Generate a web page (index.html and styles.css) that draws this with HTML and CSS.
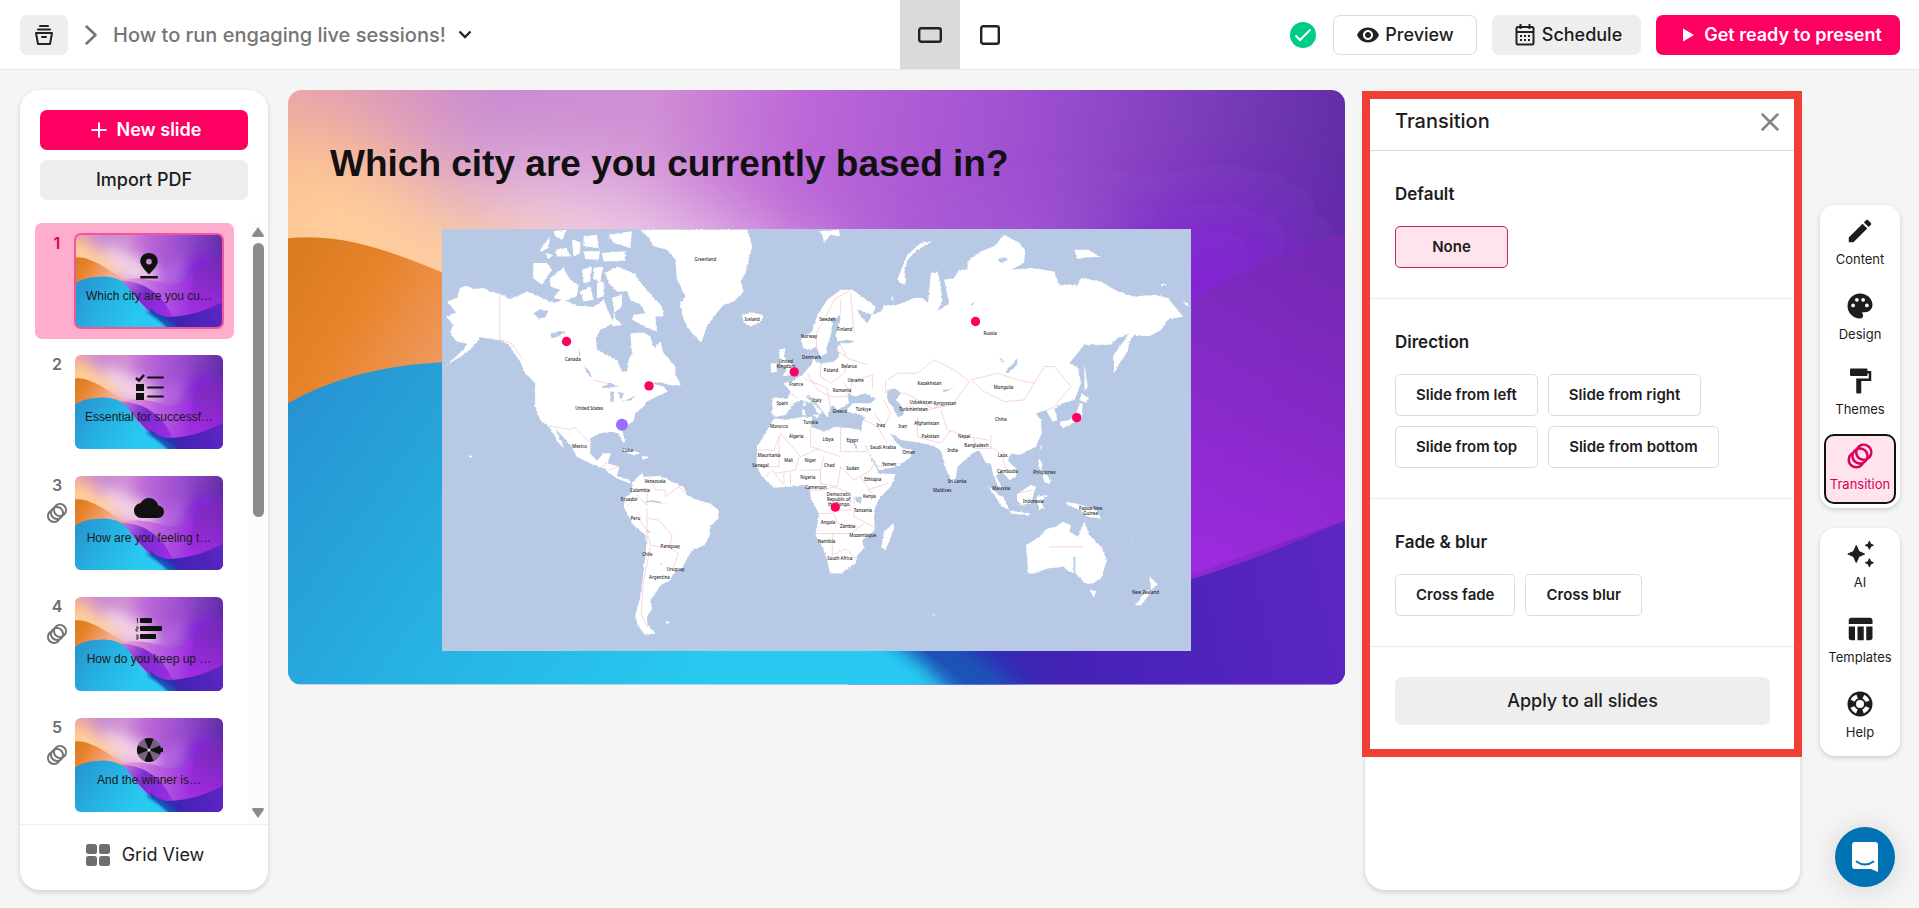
FILE: index.html
```html
<!DOCTYPE html>
<html lang="en">
<head>
<meta charset="utf-8">
<meta name="viewport" content="width=device-width, initial-scale=1">
<title>How to run engaging live sessions!</title>
<link rel="stylesheet" href="styles.css">
</head>
<body>
<svg class="defs" aria-hidden="true">
  <defs>
    <linearGradient id="sky" x1="0" y1="0" x2="1056" y2="120" gradientUnits="userSpaceOnUse">
      <stop offset="0" stop-color="#e6a0b4"/><stop offset=".2" stop-color="#c98bd0"/><stop offset=".34" stop-color="#d08fd4"/><stop offset=".48" stop-color="#bd68d8"/>
      <stop offset=".7" stop-color="#9c4fd0"/><stop offset="1" stop-color="#5f2da6"/>
    </linearGradient>
    <linearGradient id="orange" x1="0" y1="150" x2="240" y2="300" gradientUnits="userSpaceOnUse">
      <stop offset="0" stop-color="#d87a1e"/><stop offset=".35" stop-color="#e8842c"/><stop offset="1" stop-color="#f6ac90"/>
    </linearGradient>
    <linearGradient id="band" x1="340" y1="300" x2="1056" y2="300" gradientUnits="userSpaceOnUse">
      <stop offset="0" stop-color="#eba6d2"/><stop offset=".35" stop-color="#b85fe0"/><stop offset=".7" stop-color="#9a2be0"/><stop offset="1" stop-color="#7a24b8"/>
    </linearGradient>
    <linearGradient id="bandLow" x1="0" y1="180" x2="0" y2="480" gradientUnits="userSpaceOnUse">
      <stop offset="0" stop-color="#6f2bb0" stop-opacity=".6"/><stop offset="1" stop-color="#a42be6" stop-opacity=".7"/>
    </linearGradient>
    <linearGradient id="swoosh" x1="336" y1="300" x2="700" y2="520" gradientUnits="userSpaceOnUse">
      <stop offset="0" stop-color="#c878e0"/><stop offset=".4" stop-color="#7a2cd0"/><stop offset="1" stop-color="#a02ce6"/>
    </linearGradient>
    <linearGradient id="cyan" x1="0" y1="300" x2="420" y2="600" gradientUnits="userSpaceOnUse">
      <stop offset="0" stop-color="#2792d0"/><stop offset=".5" stop-color="#27b2e2"/><stop offset="1" stop-color="#28caf2"/>
    </linearGradient>
    <linearGradient id="deep" x1="640" y1="560" x2="1056" y2="480" gradientUnits="userSpaceOnUse">
      <stop offset="0" stop-color="#2334b4"/><stop offset=".3" stop-color="#4322b4"/><stop offset="1" stop-color="#5c26c2"/>
    </linearGradient>
    <filter id="soft" x="-200" y="-200" width="1500" height="1000" filterUnits="userSpaceOnUse"><feGaussianBlur stdDeviation="45"/></filter>
    <filter id="edge" x="-20%" y="-20%" width="140%" height="140%"><feGaussianBlur stdDeviation="9"/></filter>
    <filter id="coast" x="0" y="0" width="100%" height="100%">
      <feTurbulence type="fractalNoise" baseFrequency=".12" numOctaves="2" seed="4"/>
      <feDisplacementMap in="SourceGraphic" scale="8" xChannelSelector="R" yChannelSelector="G"/>
    </filter>
    <symbol id="waves" viewBox="0 0 1056 594" preserveAspectRatio="none">
      <rect width="1056" height="594" fill="url(#sky)"/>
      <g filter="url(#soft)">
        <ellipse cx="20" cy="120" rx="110" ry="90" fill="#ffbe74"/>
        <path d="M-60 80L90 70 360 200 420 300 0 240z" fill="#ffcf9c"/>
        <path d="M170 60L330 100 540 190 640 310 380 310z" fill="#f0cfe8"/>
        <path d="M560 250L800 140 720 320 600 320z" fill="#b866e2"/>
        <ellipse cx="890" cy="200" rx="130" ry="65" fill="#8420d8" transform="rotate(-25 890 200)"/>
      </g>
      <path d="M330 290C450 270 560 290 640 316C740 332 790 290 850 245C920 195 990 160 1056 143V594H560z" fill="url(#band)"/>
      <path d="M850 245C920 195 990 160 1056 143V430L800 520z" fill="url(#bandLow)"/>
      <path d="M0 148C60 142 110 165 154 182C230 212 290 270 372 292L336 310 0 330z" fill="url(#orange)"/>
      <path d="M320 292C430 300 500 320 570 372C640 420 670 480 700 526L560 520z" fill="url(#swoosh)"/>
      <path d="M540 470C580 510 640 528 700 523C820 512 900 500 1056 430V594H560z" fill="url(#deep)"/>
      <path d="M0 313C50 285 100 275 154 272C220 262 300 275 345 305C400 350 430 410 480 450C550 510 610 540 680 594H0z" fill="url(#cyan)"/>
      <path d="M500 485C580 540 620 550 670 610H740C700 560 620 520 540 490z" fill="#1f52b8" filter="url(#edge)"/>
    </symbol>
    <symbol id="i-transition" viewBox="0 0 24 24">
      <path d="M15 2c-2.71 0-5.05 1.54-6.22 3.78a7.062 7.062 0 0 0-3 3A6.997 6.997 0 0 0 2 15c0 3.87 3.13 7 7 7 2.71 0 5.05-1.54 6.22-3.78a7.062 7.062 0 0 0 3-3A6.997 6.997 0 0 0 22 9c0-3.87-3.13-7-7-7zM9 20a5.002 5.002 0 0 1-4-8c0 3.87 3.13 7 7 7-.84.63-1.88 1-3 1zm3-3a5.002 5.002 0 0 1-4-8c0 3.86 3.13 6.99 7 7-.84.63-1.88 1-3 1zm4.7-3.3c-.53.19-1.1.3-1.7.3-2.76 0-5-2.24-5-5 0-.6.11-1.17.3-1.7.53-.19 1.1-.3 1.7-.3 2.76 0 5 2.24 5 5 0 .6-.11 1.17-.3 1.7zM19 12c0-3.86-3.13-6.99-7-7a5.002 5.002 0 0 1 7 7z"/>
    </symbol>
  </defs>
</svg>

<header class="topbar">
  <div class="topbar-left">
    <button class="btn btn-grey btn-archive" aria-label="My presentations">
      <svg width="20" height="20" viewBox="0 0 20 20" fill="none" stroke="#222" stroke-width="2" stroke-linecap="round" stroke-linejoin="round"><path d="M6 1h8M4 4.500h12M2 8h16l-2 11H4zM8 12h4"/></svg>
    </button>
    <svg class="crumb" width="12" height="20" viewBox="0 0 12 20" fill="none" stroke="#757575" stroke-width="2.500" stroke-linecap="round" stroke-linejoin="round"><path d="M1.500 1.500L10.500 10l-9 8.500"/></svg>
    <button class="title-button">How to run engaging live sessions!
      <svg width="14" height="9" viewBox="0 0 14 9" fill="none" stroke="#222" stroke-width="2.300"><path d="M1.500 1.500L7 7l5.500-5.500"/></svg>
    </button>
  </div>
  <div class="ratio">
    <button class="ratio-button is-on" aria-label="Wide slide">
      <svg width="24" height="16" viewBox="0 0 24 16" fill="none" stroke="#222" stroke-width="2.400"><rect x="1.200" y="1.200" width="21.600" height="13.600" rx="2"/></svg>
    </button>
    <button class="ratio-button" aria-label="Square slide">
      <svg width="20" height="20" viewBox="0 0 20 20" fill="none" stroke="#222" stroke-width="2.400"><rect x="1.200" y="1.200" width="17.600" height="17.600" rx="2"/></svg>
    </button>
  </div>
  <div class="topbar-right">
    <svg class="saved" width="26" height="26" viewBox="0 0 26 26"><circle cx="13" cy="13" r="13" fill="#00cb88"/><path d="M5.500 13.500l4.500 4.500L20.500 7.500" fill="none" stroke="#fff" stroke-width="2"/></svg>
    <button class="btn btn-outline btn-preview">
      <svg width="24" height="24" viewBox="0 0 24 24" fill="#222"><path d="M12 4.500C7 4.500 2.730 7.610 1 12c1.730 4.390 6 7.500 11 7.500s9.270-3.110 11-7.500c-1.730-4.390-6-7.500-11-7.500zM12 17c-2.760 0-5-2.240-5-5s2.240-5 5-5 5 2.240 5 5-2.240 5-5 5zm0-8c-1.660 0-3 1.340-3 3s1.340 3 3 3 3-1.340 3-3-1.340-3-3-3z"/></svg>
      Preview
    </button>
    <button class="btn btn-grey btn-schedule">
      <svg width="20" height="22" viewBox="0 0 20 22" fill="none" stroke="#222" stroke-width="2"><rect x="1.500" y="3" width="17" height="17.500" rx="1.500"/><path d="M2 8h16M5.500 0v5M14.500 0v5"/><path d="M5 12h10M5 16h10" stroke-dasharray="2 2"/></svg>
      Schedule
    </button>
    <button class="btn btn-pink btn-present">
      <svg width="12" height="14" viewBox="0 0 12 14" fill="#fff"><path d="M1 .500v13L12 7z"/></svg>
      Get ready to present
    </button>
  </div>
</header>

<main class="workspace">
  <aside class="card sidebar">
    <div class="sidebar-actions">
      <button class="btn btn-pink btn-new"><svg width="16" height="16" viewBox="0 0 16 16" fill="none" stroke="#fff" stroke-width="2"><path d="M8 .500v15M.500 8h15"/></svg>New slide</button>
      <button class="btn btn-grey">Import PDF</button>
    </div>
    <div class="slides">
      <ol class="slide-list">
        <li class="slide-item is-selected">
          <div class="slide-meta"><span>1</span></div>
          <div class="thumb">
            <svg class="thumb-bg"><use href="#waves"/></svg>
            <div class="thumb-body">
              <svg width="30" height="30" viewBox="0 0 24 24" fill="#111"><path d="M12 1.500c-4 0-7 3-7 6.800C5 12.500 12 18.500 12 18.500s7-6 7-10.200c0-3.800-3-6.800-7-6.800zm0 4.700a2.300 2.300 0 1 1 0 4.600 2.300 2.300 0 0 1 0-4.600zM5 20v2h14v-2z" fill-rule="evenodd"/></svg>
              <span>Which city are you cu…</span>
            </div>
          </div>
        </li>
        <li class="slide-item">
          <div class="slide-meta"><span>2</span></div>
          <div class="thumb">
            <svg class="thumb-bg"><use href="#waves"/></svg>
            <div class="thumb-body">
              <svg width="30" height="30" viewBox="0 0 30 30" fill="#111"><path d="M2 12h8v7H2zM2 21h8v7H2z"/><path d="M2 6l3 2.500L10 3" fill="none" stroke="#111" stroke-width="2.500"/><path d="M14 5.500h15M14 15.500h15M14 24.500h15" stroke="#111" stroke-width="2" stroke-linecap="round"/></svg>
              <span>Essential for successf…</span>
            </div>
          </div>
        </li>
        <li class="slide-item">
          <div class="slide-meta"><span>3</span><svg width="24" height="24"><use href="#i-transition"/></svg></div>
          <div class="thumb">
            <svg class="thumb-bg"><use href="#waves"/></svg>
            <div class="thumb-body">
              <svg width="30" height="30" viewBox="0 0 24 24" fill="#111"><path d="M19.350 10.040A7.490 7.490 0 0 0 12 4C9.110 4 6.600 5.640 5.350 8.040A5.994 5.994 0 0 0 0 14c0 3.310 2.690 6 6 6h13c2.760 0 5-2.240 5-5 0-2.640-2.050-4.780-4.650-4.960z"/></svg>
              <span>How are you feeling t…</span>
            </div>
          </div>
        </li>
        <li class="slide-item">
          <div class="slide-meta"><span>4</span><svg width="24" height="24"><use href="#i-transition"/></svg></div>
          <div class="thumb">
            <svg class="thumb-bg"><use href="#waves"/></svg>
            <div class="thumb-body">
              <svg width="30" height="30" viewBox="0 0 30 30" fill="#111"><rect x="6" y="4" width="12" height="5" rx="1"/><rect x="6" y="12" width="22" height="5" rx="1"/><rect x="6" y="20" width="16" height="5" rx="1"/><path d="M2.500 5l1-.500V9M2 13h2v2H2v2h2M2 21h2v4H2m0-2h2" fill="none" stroke="#111" stroke-width=".800"/></svg>
              <span>How do you keep up …</span>
            </div>
          </div>
        </li>
        <li class="slide-item">
          <div class="slide-meta"><span>5</span><svg width="24" height="24"><use href="#i-transition"/></svg></div>
          <div class="thumb">
            <svg class="thumb-bg"><use href="#waves"/></svg>
            <div class="thumb-body">
              <svg width="30" height="30" viewBox="0 0 30 30"><circle cx="15" cy="15" r="12" fill="#7a5f86"/><path d="M15 15L10.400 3.900a12 12 0 0 1 9.200 0zM15 15l11.100-4.600a12 12 0 0 1 0 9.200zM15 15l4.600 11.100a12 12 0 0 1-9.200 0zM15 15L3.900 19.600a12 12 0 0 1 0-9.200z" fill="#111"/><path d="M22 15l7-2.500v5z" fill="#111"/><circle cx="15" cy="15" r="1.500" fill="#ddd"/></svg>
              <span>And the winner is…</span>
            </div>
          </div>
        </li>
      </ol>
      <div class="scrollbar" aria-hidden="true">
        <svg width="12" height="10" viewBox="0 0 12 10" fill="#8b8b8b"><path d="M6 0l6 8.500-.700 1.500H.700L0 8.500z"/></svg>
        <div class="scroll-track"><div class="scroll-thumb"></div></div>
        <svg width="12" height="10" viewBox="0 0 12 10" fill="#8b8b8b"><path d="M6 10L0 1.500.700 0h10.600l.700 1.500z"/></svg>
      </div>
    </div>
    <button class="grid-view">
      <svg width="24" height="24" viewBox="0 0 24 24" fill="#6e6e6e"><rect x="0" y="1" width="11" height="10" rx="2.500"/><rect x="13" y="1" width="11" height="10" rx="2.500"/><rect x="0" y="13" width="11" height="10" rx="2.500"/><rect x="13" y="13" width="11" height="10" rx="2.500"/></svg>
      Grid View
    </button>
  </aside>

  <section class="stage">
    <svg class="stage-bg"><use href="#waves"/></svg>
    <div class="stage-body">
      <h1>Which city are you currently based in?</h1>
      <svg class="map" viewBox="0 0 2244 1264" role="img" aria-label="World map with answers">
        <rect width="2244" height="1264" fill="#b7c9e5"/>
        <g filter="url(#coast)">
        <g transform="translate(-36 -28)" fill="#fff">
          <path d="M108 198L135 208 160 205 185 215 210 222 240 238 265 228 290 215 330 232 370 250 400 240 440 258 490 262 520 240 535 275 550 310 510 330 497 355 500 390 530 405 560 420 575 455 590 455 595 420 605 400 600 340 640 338 660 350 670 385 690 365 700 400 735 440 735 465 752 497 722 497 690 487 660 490 700 500 712 515 680 530 650 545 640 560 615 580 612 600 575 630 585 665 577 668 565 640 540 635 510 640 480 655 480 700 500 722 520 700 542 700 532 730 567 740 560 768 600 780 600 790 560 775 520 745 480 730 440 710 425 680 375 625 402 685 385 670 358 622 330 600 315 560 315 490 285 460 270 425 235 375 210 362 170 355 150 352 130 380 100 405 45 440 100 390 112 372 80 365 60 340 70 315 48 290 78 278 52 245 80 235 90 205z"/>
          <path d="M630 30L950 30 965 80 955 120 945 160 930 185 940 215 910 245 880 255 850 290 830 320 812 368 780 335 760 300 750 250 765 230 740 180 735 120 710 90 670 80 650 50z"/>
          <path d="M310 130L350 130 365 150 335 195 308 175zM360 175L400 145 420 180 445 195 440 230 405 242 370 235 390 210 360 200zM455 150L485 140 480 185 460 190zM490 145L518 140 510 190 488 175zM525 160L560 140 610 160 640 200 695 260 700 290 675 290 680 335 655 325 605 300 610 285 645 280 630 255 600 240 590 215 560 215 535 190zM450 215L480 200 490 240 460 245zM500 190L520 185 520 230 500 235zM545 235L575 225 575 260 550 280 545 320 575 315 555 295zM330 90L360 50 355 85 335 95zM370 35L410 30 395 60 375 50zM375 90L410 85 420 110 380 110zM425 60L450 65 450 100 430 110zM460 50L500 45 505 85 460 80zM460 95L510 95 505 120 465 118zM515 100L585 95 585 122 520 125zM535 45L605 35 600 85 550 70zM345 100L370 105 355 118z"/>
          <path d="M935 290L960 278 995 285 990 305 962 320 945 308zM720 490L740 465 735 485 752 497zM570 685L600 690 630 700 610 706 585 695zM635 708L655 710 650 718 635 716zM118 706l8 2-3 5-6-2zM705 1203l15 3-8 5z"/>
          <path d="M605 788L635 758 640 770 690 768 725 785 760 800 770 825 800 840 840 850 866 872 862 895 840 920 838 945 822 975 785 990 765 1025 755 1045 728 1062 720 1080 690 1095 675 1120 660 1140 665 1165 650 1190 652 1215 675 1240 645 1243 622 1215 615 1185 630 1130 640 1050 648 980 645 945 610 915 580 860 585 835 605 815z"/>
          <g fill="#b7c9e5"><path d="M310 280l20-12 25 5-10 20-20 3zM360 345l30-12 15 2-20 15-20 5zM445 385l6 20-5 5zM460 440l15 10 12 22-10-4zM512 505l25-15 30 8-20 4zM540 515h12l-2 30-10 2zM562 515l20 5-10 20zM570 545l25-8 20-10-12 14zM640 845l30-5 35 12-30-5zM688 1030h10v4h-8zM648 928l8 4-2 6z"/></g>
        </g>
        <g transform="translate(894 -28)" fill="#fff">
          <path d="M235 35L295 30 298 50 270 45 250 70 245 45zM575 65L530 90 500 120 490 160 495 195 478 190 470 180 485 140 500 105 540 70 570 65zM1000 90L1040 90 1080 112 1045 112 1010 118zM1260 192l18 4-16 6zM450 232l10 2-4 8z"/>
          <path d="M95 540L100 532 140 537 150 515 128 490 160 482 190 460 215 430 218 400 225 425 240 430 280 425 295 410 290 385 300 370 325 370 345 365 320 360 290 365 285 345 300 300 298 285 275 305 272 340 262 370 258 400 240 412 228 380 210 390 188 385 182 355 215 335 230 285 260 240 300 210 335 210 370 235 405 262 395 285 350 270 360 290 380 310 395 285 420 275 430 258 470 255 520 235 545 235 562 250 570 160 590 155 600 200 605 240 590 275 625 250 610 180 640 175 655 150 680 150 680 125 720 95 760 80 790 45 835 70 852 90 850 130 810 150 870 145 940 155 955 195 1010 195 1020 175 1080 185 1130 215 1180 230 1240 225 1280 235 1325 290 1280 300 1260 330 1225 350 1180 345 1165 365 1160 395 1135 430 1120 460 1115 410 1140 375 1165 340 1130 355 1110 375 1030 375 985 430 1010 440 1020 490 1000 540 965 550 940 565 950 600 935 605 915 570 885 580 900 600 902 640 885 680 835 705 810 700 800 720 828 750 825 770 805 780 780 750 765 770 790 815 775 805 757 765 750 730 735 730 715 690 695 700 650 740 645 775 635 785 615 745 600 690 570 675 520 665 480 660 450 640 460 660 485 685 515 690 510 710 470 740 415 750 360 650 365 605 375 590 345 580 315 575 335 550 390 550 405 535 370 520 345 530 320 520 325 550 290 570 275 555 265 570 262 595 240 565 205 525 195 530 245 575 235 585 215 550 180 540 160 550 135 585 105 590 95 585z"/>
          <path d="M100 595L135 600 185 590 215 590 212 620 250 635 285 620 330 625 358 630 375 680 395 720 415 760 465 762 450 800 415 835 400 870 402 930 365 960 370 985 350 1005 345 1030 300 1060 268 1060 260 1020 245 980 225 945 235 880 210 835 208 805 190 795 150 800 100 803 65 770 48 740 50 680 75 640zM458 910L460 925 435 990 422 980 430 935zM90 430L110 430 108 455 92 460zM115 390L135 385 130 410 165 445 175 460 125 470 140 450 118 430zM5 285L40 278 68 292 60 308 30 320 10 308zM740 798L790 835 805 870 785 860zM805 872L870 880 860 886 810 880zM828 822L870 795 885 800 870 850 840 855 828 840zM885 830L920 825 900 845 910 865 895 868zM895 715L905 735 900 745 930 780 925 792 910 785 905 765 893 740zM900 675l4 4-8 14zM975 845L1010 852 1065 870 1080 895 1040 890 1015 870 980 855zM955 605L985 600 1005 585 1015 550 1025 550 1022 595 990 612 965 625zM1020 520L1045 535 1030 548 1015 540zM1030 430L1040 500 1030 515zM190 545l5 2-2 15-5-2zM185 568l8 0 0 18-8 0zM215 583l20 2-5 10z"/>
          <path d="M855 975L895 950 920 925 945 920 965 905 990 915 985 935 1010 950 1030 905 1045 945 1080 980 1098 1020 1080 1075 1055 1090 1030 1088 1005 1060 985 1055 965 1040 920 1045 880 1060 862 1060zM1048 1110l18 2-8 20zM1225 1068L1250 1092 1230 1110 1228 1090zM1220 1108L1230 1115 1200 1155 1182 1155zM575 1180l10 3-7 5zM1168 962l10 6-2 3zM1325 240l22 20-15-5zM1335 320l12 8z"/>
          <g fill="#b7c9e5"><path d="M440 510L465 505 480 520 465 540 485 560 490 585 470 590 455 560 440 540zM795 455L830 415 828 435 800 460zM605 510l35-4-30 10zM345 830l18 0-2 20-14-4zM690 255l12-12-6 14zM775 410l15 15-6 4zM770 120l20-8 12 8-20 10zM330 650l20 30-4 10zM997 1010h6v60l-5-4zM270 300l12-12-4 30z"/></g>
        </g>
        </g>
        <g class="borders">
          <g transform="translate(-36 -28)"><path d="M209 225V358L245 372 278 418M358 618L420 628 435 622 475 665M515 745l15-20M535 750l30-10M490 480l45 12M625 808l35 0M655 770l20 40 30 0 0 20 40-30 20 20M590 860l30-35 30 30 0-40M650 865v100M655 895l30 5 40 45-5 30-30 5-30-5-5-25M720 985l25 15-20 50M660 980l-20 100-8 100 20 40M620 890l30 40"/></g>
          <g transform="translate(894 -28)"><path d="M228 390V340L250 300 285 235 325 215M300 240V280M330 220L340 340M300 375l20 40 60 20M285 390l30 20M240 430l0 40 30 20 40-30 10-30M200 460l30 50 40 20 55 0 10-45 60-20 0 40M150 520l20 15M190 475l70 30 10 60M310 490l20 30M440 480l30-20 60 0 50-40 60 30 45 35-50 70-60 10-80-45-60 0 0-40M690 480l80-20 60 20 50 10-30 50-60 5-60-30zM880 490l30-50 30 0 50 60-50 60-20 10M500 560l60 10 40-10M530 590l0 60 70 20M600 570l20 60 60 20 60 10M600 670l30-40M700 655l0 30 50 0 0-40M750 680l30 20 20 60M780 690l30 30M370 600l40 20 30 50M400 580l30 40 20-40-20-40M415 740l60-10M50 690h50l20-50M120 640l60 70 55-25M210 620v60l90 30M300 620v75h80M115 650l0 90-60 0M175 710l-10 40-60 10M180 750h60l10-40M240 750l0 40 50 10 10-60M300 740l40 40 50-30 10-20M75 770l20-20 30 40M130 760v35M150 760v35M210 810l40 0 30-10 50 20 0 50-40 0M230 880h50l10 30 60 10M225 940h100M275 940v65l40-20 30 30M330 940l40-30M340 830l0 60 60 30M440 790l-60 20M360 770l40 60M925 980h100M1022 865v25M825 820l50-10"/></g>
        </g>
        <g class="labels">
          <g transform="translate(-36 -28)">
            <text x="825" y="125">Greenland</text><text x="965" y="303">Iceland</text><text x="428" y="422">Canada</text><text x="477" y="571">United States</text><text x="448" y="684">Mexico</text><text x="592" y="697">Cuba</text><text x="674" y="789">Venezuela</text><text x="629" y="817">Colombia</text><text x="597" y="843">Ecuador</text><text x="615" y="899">Peru</text><text x="720" y="984">Paraguay</text><text x="651" y="1007">Chile</text><text x="736" y="1051">Uruguay</text><text x="687" y="1076">Argentina</text>
          </g>
          <g transform="translate(894 -28)">
            <text x="260" y="303">Sweden</text><text x="312" y="334">Finland</text><text x="205" y="354">Norway</text><text x="213" y="416">Denmark</text><text x="136" y="428">United</text><text x="136" y="443">Kingdom</text><text x="325" y="443">Belarus</text><text x="271" y="457">Poland</text><text x="345" y="485">Ukraine</text><text x="167" y="499">France</text><text x="304" y="517">Romania</text><text x="125" y="556">Spain</text><text x="229" y="546">Italy</text><text x="297" y="578">Greece</text><text x="368" y="573">Türkiye</text><text x="748" y="345">Russia</text><text x="566" y="496">Kazakhstan</text><text x="788" y="508">Mongolia</text><text x="541" y="552">Uzbekistan</text><text x="612" y="555">Kyrgyzstan</text><text x="518" y="573">Turkmenistan</text><text x="780" y="602">China</text><text x="558" y="614">Afghanistan</text><text x="486" y="623">Iran</text><text x="420" y="620">Iraq</text><text x="569" y="655">Pakistan</text><text x="670" y="655">Nepal</text><text x="707" y="681">Bangladesh</text><text x="636" y="696">India</text><text x="210" y="612">Tunisia</text><text x="115" y="625">Morocco</text><text x="167" y="655">Algeria</text><text x="262" y="663">Libya</text><text x="335" y="667">Egypt</text><text x="427" y="688">Saudi Arabia</text><text x="504" y="701">Oman</text><text x="445" y="737">Yemen</text><text x="86" y="712">Mauritania</text><text x="144" y="727">Mali</text><text x="209" y="727">Niger</text><text x="60" y="742">Senegal</text><text x="266" y="740">Chad</text><text x="336" y="750">Sudan</text><text x="202" y="777">Nigeria</text><text x="396" y="783">Ethiopia</text><text x="226" y="806">Cameroon</text><text x="294" y="829">Democratic</text><text x="294" y="844">Republic of</text><text x="294" y="859">the Congo</text><text x="386" y="834">Kenya</text><text x="367" y="876">Tanzania</text><text x="262" y="912">Angola</text><text x="321" y="923">Zambia</text><text x="366" y="950">Mozambique</text><text x="258" y="970">Namibia</text><text x="298" y="1019">South Africa</text><text x="785" y="711">Laos</text><text x="800" y="759">Cambodia</text><text x="910" y="763">Philippines</text><text x="649" y="788">Sri Lanka</text><text x="604" y="816">Maldives</text><text x="781" y="809">Malaysia</text><text x="877" y="850">Indonesia</text><text x="1049" y="869">Papua New</text><text x="1049" y="884">Guinea</text><text x="1213" y="1121">New Zealand</text>
          </g>
        </g>
        <g fill="#ff0062"><circle cx="373" cy="337" r="14"/><circle cx="620" cy="470" r="14"/><circle cx="1055" cy="428" r="14"/><circle cx="1598" cy="277" r="14"/><circle cx="1901" cy="565" r="14"/><circle cx="1178" cy="833" r="14"/></g>
        <circle cx="539" cy="586" r="18" fill="#9a6cff"/>
      </svg>
    </div>
  </section>

  <aside class="card panel">
    <div class="panel-content">
      <div class="panel-head">
        <h2>Transition</h2>
        <button class="close" aria-label="Close"><svg width="18" height="18" viewBox="0 0 18 18" fill="none" stroke="#858585" stroke-width="2.500" stroke-linecap="round"><path d="M1.500 1.500l15 15M16.500 1.500l-15 15"/></svg></button>
      </div>
      <section class="group"><h3>Default</h3><div class="options"><button class="option option-none is-on">None</button></div></section>
      <section class="group"><h3>Direction</h3><div class="options"><button class="option">Slide from left</button><button class="option">Slide from right</button><button class="option">Slide from top</button><button class="option">Slide from bottom</button></div></section>
      <section class="group"><h3>Fade &amp; blur</h3><div class="options"><button class="option">Cross fade</button><button class="option">Cross blur</button></div></section>
      <div class="apply"><button class="btn btn-grey">Apply to all slides</button></div>
      <div class="highlight"></div>
    </div>
  </aside>

  <div class="rail">
    <nav class="rail-group" aria-label="Slide settings">
      <button class="rail-item"><svg width="30" height="30" viewBox="0 0 24 24"><path d="M3 17.250V21h3.750L17.810 9.940l-3.750-3.750L3 17.250zM20.710 7.040a.996.996 0 0 0 0-1.410l-2.340-2.340a.996.996 0 0 0-1.410 0l-1.830 1.830 3.750 3.750 1.830-1.830z"/></svg>Content</button>
      <button class="rail-item"><svg width="30" height="30" viewBox="0 0 24 24"><path fill-rule="evenodd" d="M12 2C6.490 2 2 6.490 2 12s4.490 10 10 10c1.380 0 2.500-1.120 2.500-2.500 0-.610-.230-1.200-.640-1.670-.080-.100-.130-.210-.130-.330 0-.280.220-.500.500-.500H16c3.310 0 6-2.690 6-6 0-4.960-4.490-9-10-9zM6.500 13a1.500 1.500 0 1 1 0-3 1.500 1.500 0 0 1 0 3zm3-4.500a1.500 1.500 0 1 1 0-3 1.500 1.500 0 0 1 0 3zm5 0a1.500 1.500 0 1 1 0-3 1.500 1.500 0 0 1 0 3zm3 4.500a1.500 1.500 0 1 1 0-3 1.500 1.500 0 0 1 0 3z"/></svg>Design</button>
      <button class="rail-item"><svg width="30" height="30" viewBox="0 0 24 24"><path d="M18 4V3c0-.550-.450-1-1-1H5c-.550 0-1 .450-1 1v4c0 .550.450 1 1 1h12c.550 0 1-.450 1-1V6h1v4H9v11c0 .550.450 1 1 1h2c.550 0 1-.450 1-1v-9h8V4h-3z"/></svg>Themes</button>
      <button class="rail-item is-on"><svg width="30" height="30"><use href="#i-transition"/></svg>Transition</button>
    </nav>
    <nav class="rail-group" aria-label="Tools">
      <button class="rail-item"><svg width="30" height="30" viewBox="0 0 24 24"><path stroke="#1d1d1d" stroke-linejoin="round" d="M19.500 8l.900-2.100 2.100-.900-2.100-.900L19.500 2l-.900 2.100-2.100.900 2.100.900zM11 10L9 5.500 7 10l-4.500 2L7 14l2 4.500 2-4.500 4.500-2zM19.500 16l-.900 2.100-2.100.900 2.100.900.900 2.100.900-2.100 2.100-.900-2.100-.900z"/></svg>AI</button>
      <button class="rail-item"><svg width="30" height="30" viewBox="0 0 24 24"><path d="M10 10h5v11h-5zM17 21h3c1.100 0 2-.900 2-2v-9h-5v11zm3-18H5c-1.100 0-2 .900-2 2v3h19V5c0-1.100-.900-2-2-2zM3 19c0 1.100.900 2 2 2h3V10H3v9z"/></svg>Templates</button>
      <button class="rail-item"><svg width="30" height="30" viewBox="0 0 24 24"><circle cx="12" cy="12" r="10"/><circle cx="12" cy="12" r="6.200" fill="none" stroke="#fff" stroke-width="4" stroke-dasharray="4.870 4.870" stroke-dashoffset="-2.435"/><circle cx="12" cy="12" r="4" fill="#fff" stroke="#1d1d1d" stroke-width="1.600"/></svg>Help</button>
    </nav>
  </div>
</main>

<button class="chat" aria-label="Open chat">
  <svg width="28" height="32" viewBox="0 0 28 32"><path d="M4 1h20a3 3 0 0 1 3 3v27l-7-3H4a3 3 0 0 1-3-3V4a3 3 0 0 1 3-3z" fill="#fff"/><path d="M5.500 20.500c5 4 12 4 17 0" fill="none" stroke="#0071b2" stroke-width="1.800" stroke-linecap="round"/></svg>
</button>
</body>
</html>
```
FILE: styles.css
```css
* { box-sizing: border-box; }

body {
  margin: 0;
  min-height: 100vh;
  display: flex;
  flex-direction: column;
  background: #f5f5f5;
  color: #1d1d1d;
  font: 400 18px/24px Inter, "Liberation Sans", sans-serif;
}

button {
  margin: 0;
  padding: 0;
  border: 0;
  background: none;
  color: inherit;
  font: inherit;
  cursor: pointer;
}

h1, h2, h3, ol { margin: 0; padding: 0; }
svg { display: block; flex: none; }
.defs { position: absolute; width: 0; height: 0; }

.topbar {
  display: grid;
  grid-template-columns: 1fr auto 1fr;
  align-items: center;
  height: 70px;
  padding: 0 19px 0 20px;
  background: #fff;
  border-bottom: 1px solid #e6e6e6;
}
.topbar-left, .topbar-right { display: flex; align-items: center; }
.topbar-right { justify-content: flex-end; gap: 15px; }
.saved { margin-right: 2px; }

.btn {
  display: inline-flex;
  align-items: center;
  justify-content: center;
  gap: 8px;
  height: 40px;
  border-radius: 7px;
  font-weight: 500;
  white-space: nowrap;
}
.btn-grey { background: #eee; }
.btn-outline { border: 1px solid #dcdcdc; background: #fff; }
.btn-pink { background: #ff0062; color: #fff; font-weight: 600; }
.btn-archive { width: 48px; }
.btn-preview { width: 144px; gap: 5px; }
.btn-schedule { width: 149px; padding-left: 4px; gap: 7px; }
.btn-present { width: 244px; padding-left: 8px; gap: 10px; }
.btn-new { padding-left: 4px; gap: 10px; }

.crumb { margin: 0 16px 0 17px; }
.title-button {
  display: flex;
  align-items: center;
  gap: 12px;
  color: #757575;
  font-size: 20px;
  font-weight: 500;
  white-space: nowrap;
}
.ratio { display: flex; align-self: stretch; }
.ratio-button { display: flex; align-items: center; justify-content: center; width: 60px; }
.ratio-button.is-on { background: #dadada; }

.workspace {
  flex: 1;
  display: flex;
  align-items: stretch;
  gap: 20px;
  padding: 20px 19px 18px 20px;
}
.card {
  background: #fff;
  border-radius: 20px;
  box-shadow: 0 2px 5px rgba(0, 0, 0, .16);
}

.sidebar { display: flex; flex-direction: column; flex: none; width: 248px; }
.sidebar-actions { display: grid; gap: 10px; padding: 20px 20px 23px; }
.slides { flex: 1; display: flex; justify-content: space-between; padding-left: 15px; }
.slide-list { display: grid; gap: 5px; align-content: start; width: 199px; list-style: none; }
.slide-item {
  display: flex;
  gap: 8px;
  padding: 11px 11px 11px 12px;
  border-radius: 7px;
}
.slide-meta {
  display: flex;
  flex-direction: column;
  align-items: center;
  gap: 7px;
  width: 20px;
  color: #6e6e6e;
  font-size: 16px;
  font-weight: 600;
  line-height: 18px;
}
.slide-meta svg { fill: #757575; }
.slide-item.is-selected { background: #ffadcd; }
.slide-item.is-selected .slide-meta { color: #e0005c; }
.thumb {
  display: grid;
  flex: 1;
  height: 94px;
  border-radius: 6px;
  overflow: hidden;
}
.is-selected .thumb { outline: 2px solid #f0569a; outline-offset: -1px; }
.thumb-bg, .thumb-body { grid-area: 1 / 1; }
.thumb-bg { width: 100%; height: 100%; }
.thumb-body {
  z-index: 1;
  display: flex;
  flex-direction: column;
  align-items: center;
  gap: 7px;
  padding-top: 17px;
  color: #1a1a1a;
  font: 12px/16px "Liberation Sans", Arial, sans-serif;
  white-space: nowrap;
}
.scrollbar {
  display: flex;
  flex-direction: column;
  align-items: center;
  gap: 6px;
  width: 20px;
  padding: 4px 0 6px;
  background: #fcfcfc;
}
.scroll-track { flex: 1; }
.scroll-thumb { width: 11px; height: 49%; border-radius: 6px; background: #8b8b8b; }
.grid-view {
  display: flex;
  align-items: center;
  justify-content: center;
  gap: 12px;
  height: 66px;
  padding: 0 8px 6px 10px;
  border-top: 1px solid #eee;
}

.stage {
  display: grid;
  flex: 1;
  align-self: flex-start;
  aspect-ratio: 16 / 9;
  border-radius: 14px;
  overflow: hidden;
  min-width: 0;
}
.stage-bg, .stage-body { grid-area: 1 / 1; width: 100%; min-height: 0; }
.stage-bg { height: 100%; }
.stage-body {
  z-index: 1;
  display: flex;
  flex-direction: column;
  align-items: center;
  width: auto;
  gap: 41px;
  padding: 50px 42px 0;
}
.stage h1 {
  align-self: stretch;
  color: #111;
  font: 700 37px/48px "Liberation Sans", Arial, sans-serif;
  white-space: nowrap;
}
.map { width: 77%; height: auto; }
.borders path { fill: none; stroke: #f6bccb; stroke-width: 2; }
.labels text {
  fill: #222;
  font: 500 13px "Noto Sans", sans-serif;
  text-anchor: middle;
}

.panel { flex: none; width: 435px; }
.panel-content { position: relative; }
.panel-head {
  display: flex;
  align-items: center;
  justify-content: space-between;
  height: 61px;
  padding: 1px 21px 0 30px;
  border-bottom: 1px solid #d9d9d9;
}
h2 { font-size: 20px; font-weight: 500; }
.close { margin-top: 2px; }
.group { padding: 30px; border-bottom: 1px solid #ebebeb; }
h3 { margin-bottom: 19px; font-size: 17px; line-height: 26px; font-weight: 600; }
.options { display: flex; flex-wrap: wrap; gap: 10px; }
.option {
  height: 42px;
  padding: 0 20px;
  border: 1px solid #dcdcdc;
  border-radius: 5px;
  background: #fff;
  font-size: 15px;
  font-weight: 600;
}
.option-none { width: 113px; }
.option.is-on { border-color: #c8206c; background: #ffe4ed; }
.apply { padding: 30px 30px 31px; }
.apply .btn { width: 100%; height: 48px; }
.highlight {
  position: absolute;
  inset: 1px -2px -1px -3px;
  border: 8px solid #f04036;
  pointer-events: none;
}

.rail {
  display: flex;
  flex-direction: column;
  flex: none;
  gap: 20px;
  width: 80px;
  padding-top: 115px;
}
.rail-group {
  display: grid;
  gap: 5px;
  padding: 4px;
  border-radius: 15px;
  background: #fff;
  box-shadow: 0 2px 5px rgba(0, 0, 0, .16);
}
.rail-item {
  display: flex;
  flex-direction: column;
  align-items: center;
  gap: 4px;
  height: 70px;
  padding-top: 5px;
  border: 2px solid transparent;
  border-radius: 10px;
  font-size: 13px;
  line-height: 18px;
  fill: #1d1d1d;
}
.rail-item.is-on {
  border-color: #111;
  background: #ffe4ed;
  color: #d6005c;
  fill: #e0005c;
}

.chat {
  position: fixed;
  right: 24px;
  bottom: 21px;
  display: flex;
  align-items: center;
  justify-content: center;
  width: 60px;
  height: 60px;
  border-radius: 50%;
  background: #0071b2;
  box-shadow: 0 2px 30px rgba(0, 0, 0, .14);
}
```
